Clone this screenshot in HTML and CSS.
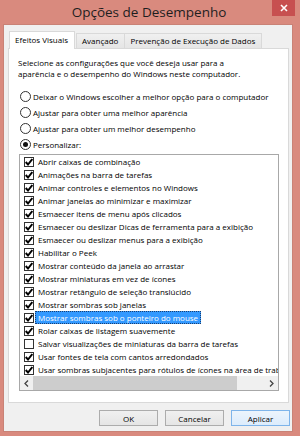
FILE: index.html
```html
<!DOCTYPE html>
<html lang="pt-BR">
<head>
  <meta charset="UTF-8" />
  <title>Opções de Desempenho</title>
  <link rel="stylesheet" href="styles.css">
</head>
<body>
  <div class="window">
    <div class="titlebar">
      <span></span>
      <span class="title">Opções de Desempenho</span>
      <span class="close">
        <svg width="8" height="8" viewBox="0 0 8 8"><path d="M1 1L7 7M7 1L1 7" stroke="#fff" stroke-width="1.6"/></svg>
      </span>
    </div>

    <div class="client">
      <div class="tabs">
        <div class="tab active">Efeitos Visuais</div>
        <div class="tab">Avançado</div>
        <div class="tab">Prevenção de Execução de Dados</div>
      </div>

      <div class="panel">
        <p class="desc">Selecione as configurações que você deseja usar para a<br>aparência e o desempenho do Windows neste computador.</p>

        <div class="radios">
          <div class="radio"><span class="circle"></span>Deixar o Windows escolher a melhor opção para o computador</div>
          <div class="radio"><span class="circle"></span>Ajustar para obter uma melhor aparência</div>
          <div class="radio"><span class="circle"></span>Ajustar para obter um melhor desempenho</div>
          <div class="radio"><span class="circle on"></span>Personalizar:</div>
        </div>

        <div class="list">
          <div class="items" id="items">
            <!-- filled by the script below -->
          </div>
          <div class="hscroll">
            <span class="arrow"><svg width="5" height="7" viewBox="0 0 5 7"><path d="M4 0.5L1 3.5L4 6.5" fill="none" stroke="#444" stroke-width="1.3"/></svg></span>
            <span class="thumb"></span>
            <span class="track"></span>
            <span class="arrow"><svg width="5" height="7" viewBox="0 0 5 7"><path d="M1 0.5L4 3.5L1 6.5" fill="none" stroke="#444" stroke-width="1.3"/></svg></span>
          </div>
        </div>
      </div>

      <div class="buttons">
        <span class="btn">OK</span>
        <span class="btn">Cancelar</span>
        <span class="btn hot">Aplicar</span>
      </div>
    </div>
  </div>

  <script>
    const options = [
      ['Abrir caixas de combinação', 1],
      ['Animações na barra de tarefas', 1],
      ['Animar controles e elementos no Windows', 1],
      ['Animar janelas ao minimizar e maximizar', 1],
      ['Esmaecer itens de menu após clicados', 1],
      ['Esmaecer ou deslizar Dicas de ferramenta para a exibição', 1],
      ['Esmaecer ou deslizar menus para a exibição', 1],
      ['Habilitar o Peek', 1],
      ['Mostrar conteúdo da janela ao arrastar', 1],
      ['Mostrar miniaturas em vez de ícones', 1],
      ['Mostrar retângulo de seleção translúcido', 1],
      ['Mostrar sombras sob janelas', 1],
      ['Mostrar sombras sob o ponteiro do mouse', 1, 'selected'],
      ['Rolar caixas de listagem suavemente', 1],
      ['Salvar visualizações de miniaturas da barra de tarefas', 0],
      ['Usar fontes de tela com cantos arredondados', 1],
      ['Usar sombras subjacentes para rótulos de ícones na área de trabalho', 1]
    ];
    const tick = '<svg width="8" height="8" viewBox="0 0 8 8"><path d="M0.7 4L3 6.5L7.3 1" fill="none" stroke="#000" stroke-width="1.9"/></svg>';
    const list = document.getElementById('items');
    options.forEach(([label, checked, state]) => {
      const row = document.createElement('div');
      row.className = 'item';
      row.innerHTML = `
        <span class="box">${checked ? tick : ''}</span>
        <span class="label ${state || ''}">${label}</span>
      `;
      list.appendChild(row);
    });
  </script>
</body>
</html>
```

FILE: styles.css
```css
body {
  margin: 0;
  font-family: "Segoe UI", "Open Sans", sans-serif;
  font-size: 8px;
  color: #000;
  background: #d98a7e;
}

.window {
  width: 300px;
  height: 436px;
  padding: 0 0 4px 3px;
  box-sizing: border-box;
}

.titlebar {
  display: grid;
  grid-template-columns: 23px 1fr 23px;
  height: 24px;
  padding-right: 5px;
}

.title {
  text-align: center;
  font-size: 13.5px;
  line-height: 24px;
  color: #1e1e1e;
}

.close {
  height: 16px;
  background: #c75050;
  display: flex;
  align-items: center;
  justify-content: center;
}

.client {
  width: 290px;
  box-sizing: border-box;
  background: #f0f0f0;
  border: 1px solid #c98276;
  padding: 6px 3px 5px 4px;
}

.tabs {
  display: flex;
  align-items: flex-end;
  margin-left: 1px;
  height: 17px;
}

.tab {
  height: 15px;
  line-height: 14px;
  padding: 0 6px 0 5px;
  border: 1px solid #d9d9d9;
  border-bottom: none;
  box-sizing: border-box;
  background: linear-gradient(#f0f0f0, #e5e5e5);
  margin-left: -1px;
  white-space: nowrap;
}

.tab.active {
  height: 18px;
  line-height: 15px;
  margin: 0 0 -1px 0;
  background: #fff;
  position: relative;
  z-index: 1;
}

.tab.active + .tab {
  margin-left: 1px;
}

.panel {
  width: 281px;
  box-sizing: border-box;
  background: #fff;
  border: 1px solid #d9d9d9;
  padding: 8px 9px 11px 9px;
}

.desc {
  margin: 0;
  line-height: 11px;
  white-space: nowrap;
}

.radios {
  margin-top: 9px;
}

.radio {
  height: 16px;
  display: flex;
  align-items: center;
  white-space: nowrap;
}

.circle {
  width: 11px;
  height: 11px;
  box-sizing: border-box;
  border: 1px solid #333;
  border-radius: 50%;
  background: #fff;
  margin: 0 2px 0 2px;
  display: flex;
  align-items: center;
  justify-content: center;
}

.circle.on::after {
  content: "";
  width: 5px;
  height: 5px;
  border-radius: 50%;
  background: #111;
}

.list {
  margin: 2px 0 0 1px;
  border: 1px solid #a8a8a8;
  overflow: hidden;
}

.item {
  height: 13px;
  display: flex;
  align-items: center;
  padding-left: 4px;
  white-space: nowrap;
}

.box {
  flex: none;
  width: 10px;
  height: 10px;
  box-sizing: border-box;
  border: 1px solid #333;
  background: #fff;
  display: flex;
  align-items: center;
  justify-content: center;
  margin-right: 2px;
}

.label {
  line-height: 11px;
  padding: 0 2px;
  border: 1px solid transparent;
  margin-left: -1px;
}

.label.selected {
  background: #3399ff;
  color: #fff;
  border: 1px dotted #1b3f70;
}

.hscroll {
  display: flex;
  height: 14px;
  background: #f0f0f0;
}

.arrow {
  width: 13px;
  display: flex;
  align-items: center;
  justify-content: center;
}

.thumb {
  width: 204px;
  background: #cdcdcd;
}

.track {
  flex: 1;
}

.buttons {
  display: flex;
  justify-content: flex-end;
  gap: 7px;
  margin: 7px -1px 0 0;
}

.btn {
  width: 59px;
  height: 16px;
  box-sizing: border-box;
  border: 1px solid #acacac;
  background: linear-gradient(#f0f0f0, #e5e5e5);
  display: flex;
  align-items: center;
  justify-content: center;
}

.btn.hot {
  border-color: #7eb4ea;
  background: linear-gradient(#ecf4fc, #dcecfc);
}
```
